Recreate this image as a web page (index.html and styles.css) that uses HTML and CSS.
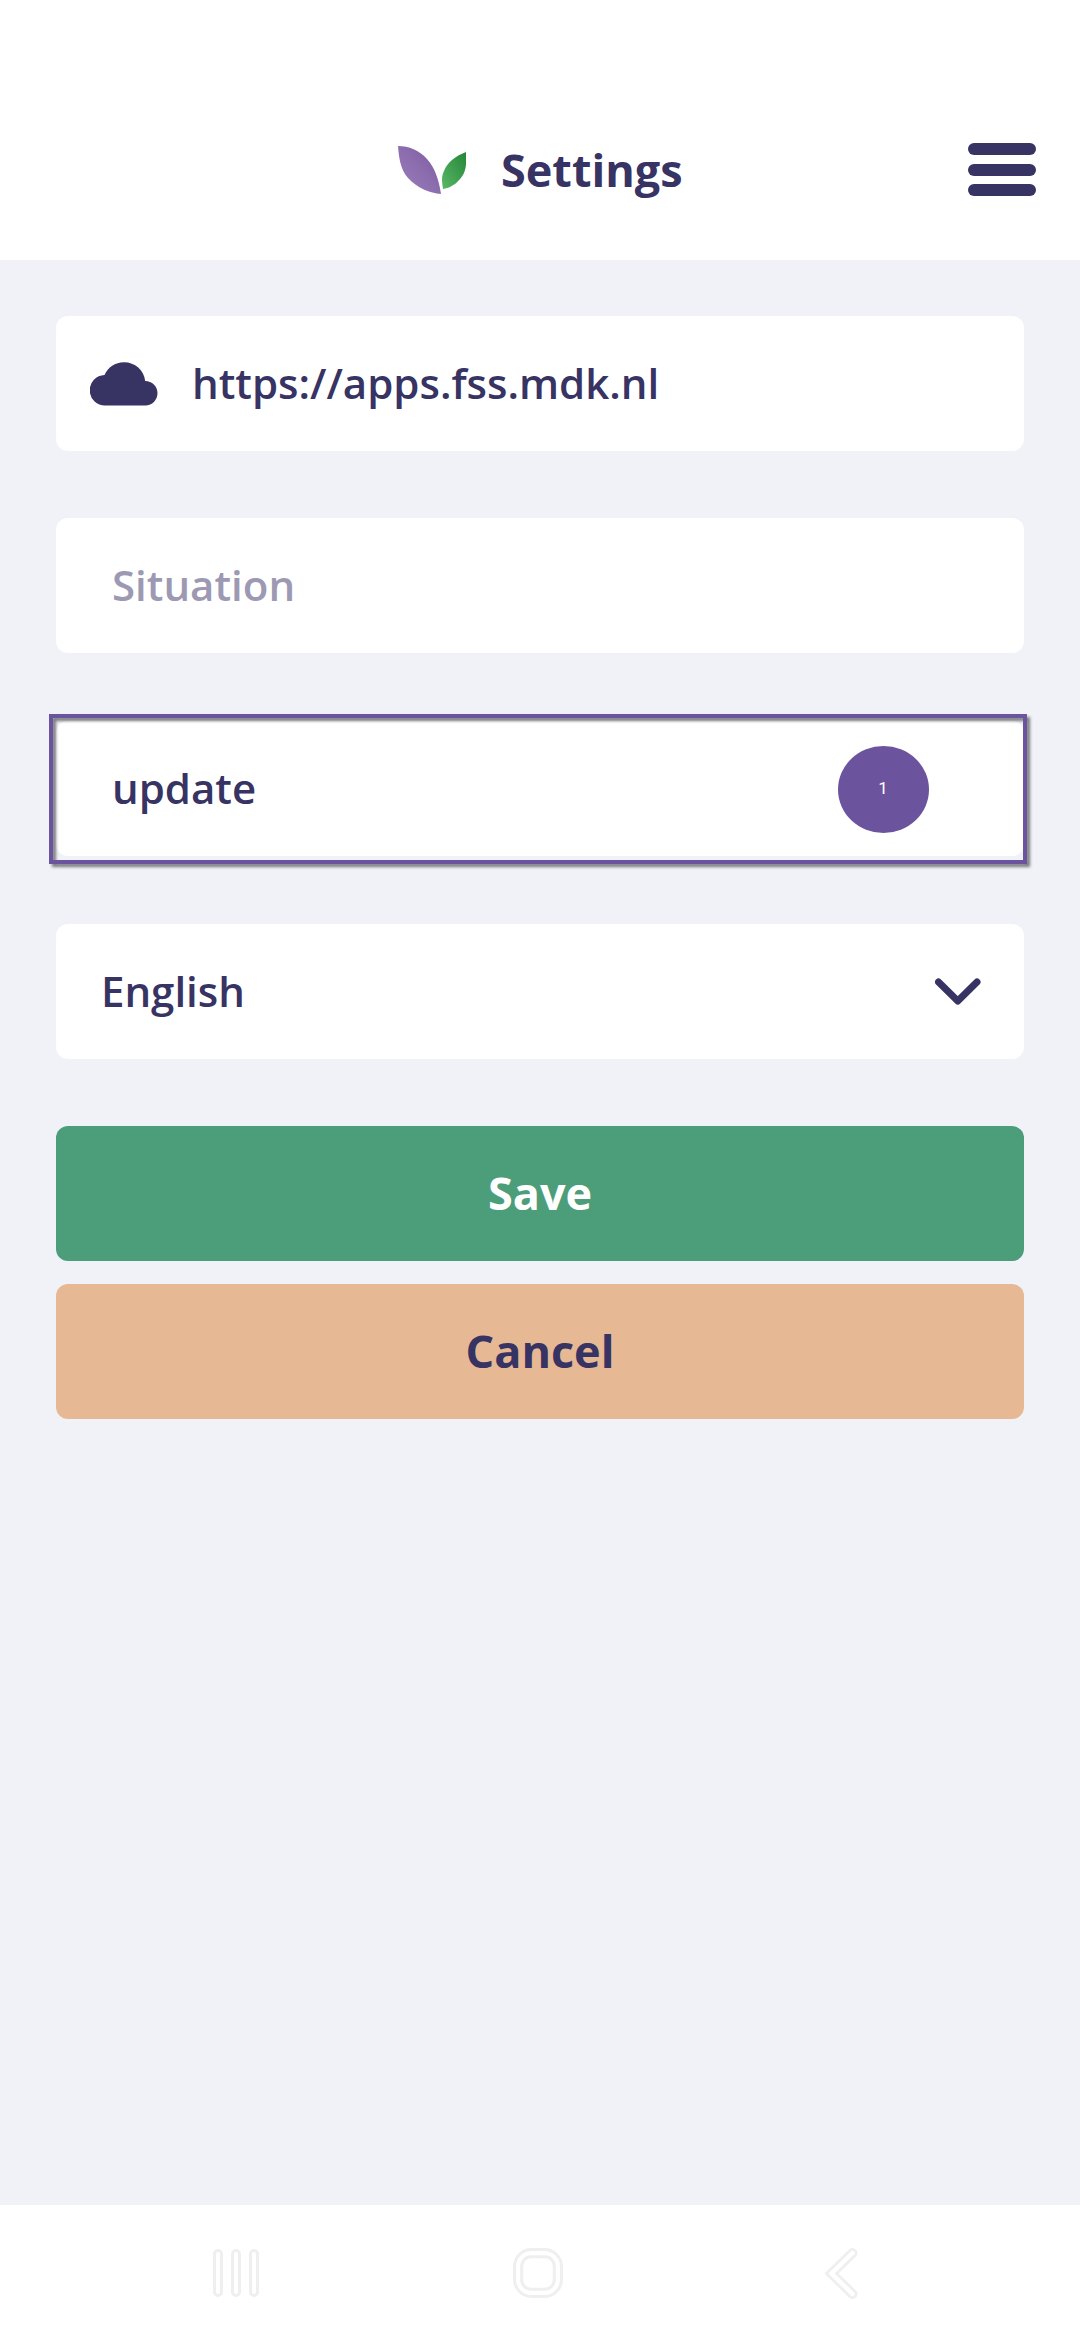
FILE: index.html
```html
<!DOCTYPE html>
<html lang="en">
<head>
<meta charset="utf-8">
<title>Settings</title>
<link rel="stylesheet" href="styles.css">
</head>
<body>
<div class="screen">
  <header class="header">
    <div class="brand">
      <svg class="logo" viewBox="0 0 68 48" width="68" height="48" aria-hidden="true">
        <defs>
          <linearGradient id="purple" x1="0" y1="1" x2="1" y2="0">
            <stop offset="0" stop-color="#9c80bd"/><stop offset="1" stop-color="#7c5a9f"/>
          </linearGradient>
          <linearGradient id="green" x1="0" y1="1" x2="1" y2="0">
            <stop offset="0" stop-color="#5ab866"/><stop offset="1" stop-color="#258638"/>
          </linearGradient>
        </defs>
        <path fill="url(#purple)" d="M0 0C11 0 21 4 29 13C37 22 41 34 43 48C32 47 19 42 10 32C2 23 1 11 0 0Z"/>
        <path fill="url(#green)" d="M68 6C57 10 49 17 46 25C43 31 44 37 45 43C54 42 62 35 66 27C69 20 68 13 68 6Z"/>
      </svg>
      <h1 class="title">Settings</h1>
    </div>
    <button class="menu" aria-label="Menu"><span class="bar"></span><span class="bar"></span><span class="bar"></span></button>
  </header>
  <main class="form">
    <div class="field with-icon">
      <svg class="cloud" viewBox="0 0 68 44" width="68" height="44" aria-hidden="true">
        <path fill="#373363" d="M15.500 43.500A15.250 15.250 0 0 1 14.500 13C18 5 25 0.200 34 0.200C45 0.200 54 8 55.200 19C62 19 67.500 24 67.500 31C67.500 38 62 43.500 55.500 43.500Z"/>
      </svg>
      <span class="text url">https://apps.fss.mdk.nl</span>
    </div>
    <div class="field padded"><span class="text placeholder">Situation</span></div>
    <div class="field padded highlighted">
      <span class="text update">update</span>
      <span class="marker">1</span>
    </div>
    <div class="field select">
      <span class="text english">English</span>
      <svg class="chevron" viewBox="0 0 46 28" width="46" height="28" aria-hidden="true">
        <path d="M3.500 4L22.800 23L42 4" fill="none" stroke="#373363" stroke-width="7" stroke-linecap="round" stroke-linejoin="round"/>
      </svg>
    </div>
    <div class="actions">
      <button class="button save">Save</button>
      <button class="button cancel">Cancel</button>
    </div>
  </main>
  <nav class="navbar">
    <svg class="recents" viewBox="0 0 46 50" width="46" height="50" fill="none" stroke="#efefef" stroke-width="3">
      <rect x="1.500" y="2.500" width="7" height="45" rx="3.500"/>
      <rect x="19.500" y="2.500" width="7" height="45" rx="3.500"/>
      <rect x="37.500" y="2.500" width="7" height="45" rx="3.500"/>
    </svg>
    <svg class="home" viewBox="0 0 50 50" width="50" height="50" fill="none" stroke="#efefef" stroke-width="3">
      <rect x="1.500" y="1.500" width="47" height="47" rx="17"/>
      <rect x="8.700" y="8.700" width="32.600" height="32.600" rx="9.500"/>
    </svg>
    <svg class="back" viewBox="0 0 34 52" width="34" height="52" fill="none" stroke-linecap="round">
      <path d="M28.500 6L7.500 26.500L28.500 47" stroke="#efefef" stroke-width="10"/>
      <path d="M28.500 6L7.500 26.500L28.500 47" stroke="#fff" stroke-width="4.500"/>
    </svg>
  </nav>
</div>
</body>
</html>
```
FILE: styles.css
```css
*, *::after { box-sizing: border-box; }
body { margin: 0; font-family: "Open Sans", "Noto Sans", sans-serif; color: #373363; }
button { border: 0; padding: 0; font: inherit; color: inherit; }
.screen { display: flex; flex-direction: column; width: 1080px; height: 2340px; background: #f1f2f8; }

.header { display: flex; justify-content: space-between; height: 260px; padding: 143px 44px 0 398px; background: #fff; }
.brand { display: flex; align-items: flex-start; gap: 35px; padding-top: 3px; }
.logo { display: block; }
.title { margin: -7px 0 0; font-size: 45px; line-height: 61px; font-weight: 700; white-space: nowrap; }
.menu { display: flex; flex-direction: column; justify-content: space-between; width: 68px; height: 53px; background: none; }
.bar { height: 12px; border-radius: 6px; background: #373363; }

.form { flex: 1; display: flex; flex-direction: column; gap: 67px; padding: 56px 56px 0; }
.field { position: relative; display: flex; align-items: center; height: 135px; border-radius: 12px; background: #fff; }
.with-icon { padding-left: 34px; gap: 34px; }
.padded { padding-left: 56px; }
.highlighted { margin: 1px 0; }
.select { justify-content: space-between; padding: 0 43px 0 45px; }
.text { padding-bottom: 2px; font-size: 42px; line-height: 58px; font-weight: 600; white-space: nowrap; }
.placeholder { color: #9d99b3; }

/* The annotation frame sits over the field and its surroundings. */
.highlighted::after { content: ""; position: absolute; left: -7px; top: -7px; width: 978px; height: 150px; border: 4px solid #6c539e; filter: drop-shadow(3px 3px 1.500px rgba(0, 0, 0, .5)); }
.marker { position: absolute; left: 781.500px; top: 24.500px; width: 91px; height: 87px; border-radius: 50%; background: #6c539e; color: #fff; font: 400 17px/85px Roboto, sans-serif; text-align: center; }

.actions { display: flex; flex-direction: column; gap: 23px; }
.button { height: 135px; padding-bottom: 2px; border-radius: 12px; font-size: 45px; font-weight: 700; }
.save { background: #4c9d79; color: #fff; }
.cancel { background: #e6b994; }

.navbar { display: flex; align-items: center; height: 135px; padding-left: 213px; background: #fff; }
.home { margin-left: 254px; }
.back { margin-left: 261px; }
```
